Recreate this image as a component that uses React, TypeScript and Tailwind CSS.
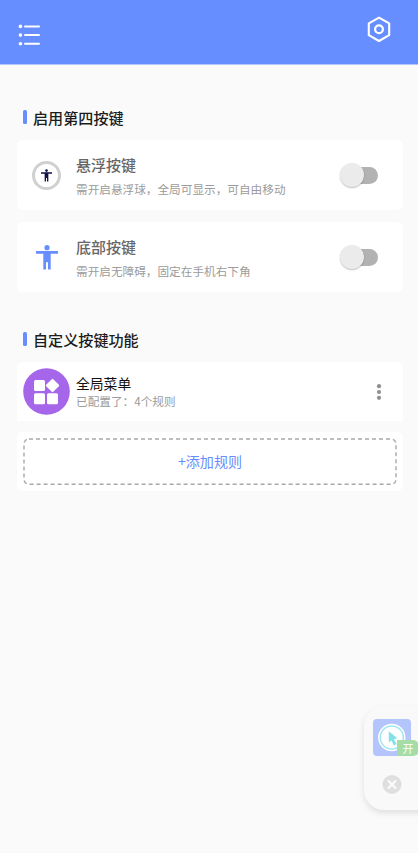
import React from 'react';

interface SwitchCardProps {
    icon: React.ReactNode;
    title: string;
    description: string;
}

const MenuIcon: React.FC = () => (
    <svg width="24" height="24" viewBox="0 0 24 24" fill="#fff">
        <circle cx="2.4" cy="3.4" r="1.8" />
        <circle cx="2.4" cy="12.1" r="1.8" />
        <circle cx="2.4" cy="20.8" r="1.8" />
        <path d="M7 3.4H21M7 12.1H21M7 20.8H21" stroke="#fff" strokeWidth="2" strokeLinecap="round" />
    </svg>
);

const SettingsIcon: React.FC = () => (
    <svg width="26" height="28" viewBox="0 0 26 28" fill="none" stroke="#fff" strokeWidth="2.1" strokeLinejoin="round">
        <path d="M13 2.6L23.2 8.4V20.2L13 26L2.8 20.2V8.4Z" />
        <circle cx="13" cy="14.3" r="3.9" strokeWidth="2.2" />
    </svg>
);

const PersonIcon: React.FC<{ className: string }> = ({ className }) => (
    <svg className={className} viewBox="0 0 22 25" fill="currentColor">
        <circle cx="11" cy="2.7" r="2.6" />
        <path d="M0 6H22V8.8H14.7V24.5H12V17.3H10V24.5H7.3V8.8H0Z" />
    </svg>
);

const SectionTitle: React.FC<{ children: React.ReactNode }> = ({ children }) => (
    <div className="flex items-center h-5 pl-[23px]">
        <span className="w-1 h-[14px] mr-[6px] rounded-[1.5px] bg-[#678eff]" />
        <h2 className="text-[15.1px] leading-5 font-medium text-[#1c1c1c]">{children}</h2>
    </div>
);

const Toggle: React.FC = () => (
    <div className="w-[38px] h-6 flex items-center">
        <span className="w-6 h-6 shrink-0 rounded-full bg-[#ebebeb] shadow-[0_1px_1.5px_rgba(0,0,0,0.25)] z-10" />
        <span className="w-[26px] h-[17px] shrink-0 -ml-3 rounded-r-full bg-[#b2b2b2]" />
    </div>
);

const SwitchCard: React.FC<SwitchCardProps> = ({ icon, title, description }) => (
    <div className="ml-[17px] w-[386px] h-[70px] flex items-center rounded-[6px] bg-white pl-[14px] pr-[25px]">
        <div className="w-[31px] flex justify-center">{icon}</div>
        <div className="ml-[14px] pt-[3px] flex-1 whitespace-nowrap">
            <div className="text-[15px] leading-6 font-medium text-[#666]">{title}</div>
            <div className="text-[11.65px] leading-6 text-[#9b9b9b]">{description}</div>
        </div>
        <Toggle />
    </div>
);

const FloatingPanel: React.FC = () => (
    <div className="absolute left-[364px] top-[706px] w-[80px] h-[104px] rounded-[20px] bg-[#f9f9f9] shadow-[0_3px_6px_rgba(0,0,0,0.11)]">
        <div className="absolute left-[9px] top-[13px] w-[38px] h-[37px] rounded-[4px] bg-[#b4c4fd]">
            <svg width="38" height="37" viewBox="0 0 38 37">
                <circle cx="18.8" cy="18.5" r="13.7" fill="#fff" />
                <circle cx="18.8" cy="18.5" r="11.5" fill="none" stroke="#9de6ef" strokeWidth="1.4" />
                <path d="M15.8 12.2L24.3 19.2L20.8 20.1L23.6 25.1L21 26.4L18.4 21.4L15.8 23.6Z" fill="#7fe3e8" />
            </svg>
        </div>
        <span className="absolute left-[33px] top-[34px] w-[22px] h-4 rounded-r-[6px] bg-[#a6dca5] text-white text-[11px] leading-4 text-center">开</span>
        <svg className="absolute left-[18px] top-[68px]" width="20" height="20" viewBox="0 0 20 20">
            <circle cx="10" cy="10.4" r="9.5" fill="#dfdfdf" />
            <path d="M6.6 7L13.4 13.8M13.4 7L6.6 13.8" stroke="#fafafa" strokeWidth="2.4" strokeLinecap="round" />
        </svg>
    </div>
);

export default function App() {
    return (
        <div className="relative w-[418px] h-[853px] overflow-hidden bg-[#fafafa] font-['Noto_Sans_CJK_SC',sans-serif]">
            <header className="h-16 flex justify-between border-b border-[#b3c6fd] box-content bg-[#678eff] pl-[18px] pr-[26px]">
                <div className="pt-[23px]"><MenuIcon /></div>
                <div className="pt-[15px]"><SettingsIcon /></div>
            </header>

            <main className="pt-[42px]">
                <SectionTitle>启用第四按键</SectionTitle>
                <div className="mt-[13px] flex flex-col gap-3">
                    <SwitchCard
                        icon={
                            <span className="w-[29px] h-[29px] flex items-center justify-center rounded-full border-[3px] border-[#d0d0d0] bg-white">
                                <PersonIcon className="w-[11px] h-[13px] text-[#101048]" />
                            </span>
                        }
                        title="悬浮按键"
                        description="需开启悬浮球，全局可显示，可自由移动"
                    />
                    <SwitchCard
                        icon={<PersonIcon className="w-[22px] h-[25px] text-[#678eff]" />}
                        title="底部按键"
                        description="需开启无障碍，固定在手机右下角"
                    />
                </div>

                <div className="mt-[37px]">
                    <SectionTitle>自定义按键功能</SectionTitle>
                </div>
                <div className="mt-[13px] ml-[17px] w-[386px] h-[59px] flex items-center rounded-t-[6px] bg-white pl-[6px] pr-[21px]">
                    <svg width="47" height="47" viewBox="0 0 47 47" fill="#fff">
                        <circle cx="23.5" cy="23.5" r="23.3" fill="#a566ea" />
                        <rect x="11" y="12" width="11" height="11" rx="1.5" />
                        <rect x="11" y="25.2" width="11" height="11" rx="1.5" />
                        <rect x="24" y="25.2" width="11" height="11" rx="1.5" />
                        <rect x="24.5" y="12.5" width="10" height="10" rx="1" transform="rotate(45 29.5 17.5)" />
                    </svg>
                    <div className="ml-[6px] flex-1">
                        <div className="text-[13.8px] leading-[18px] text-[#111]">全局菜单</div>
                        <div className="text-[11.65px] leading-[17px] text-[#9b9b9b]">已配置了：4个规则</div>
                    </div>
                    <svg width="6" height="18" viewBox="0 0 6 18" fill="#8f8f8f">
                        <circle cx="3" cy="3.2" r="2.1" />
                        <circle cx="3" cy="9" r="2.1" />
                        <circle cx="3" cy="14.8" r="2.1" />
                    </svg>
                </div>

                <div className="mt-[11px] ml-[17px] w-[386px] h-[59px] rounded-[6px] bg-white p-[6px]">
                    <button className="relative w-full h-full pt-px flex items-center justify-center text-[14.1px] text-[#678eff]">
                        <svg className="absolute inset-0" width="374" height="47" viewBox="0 0 374 47" fill="none">
                            <rect x="1" y="1" width="372" height="45.3" rx="5" stroke="#a8a8a8" strokeWidth="1.4" strokeDasharray="4 3" />
                        </svg>
                        <span>+添加规则</span>
                    </button>
                </div>
            </main>

            <FloatingPanel />
        </div>
    );
}
